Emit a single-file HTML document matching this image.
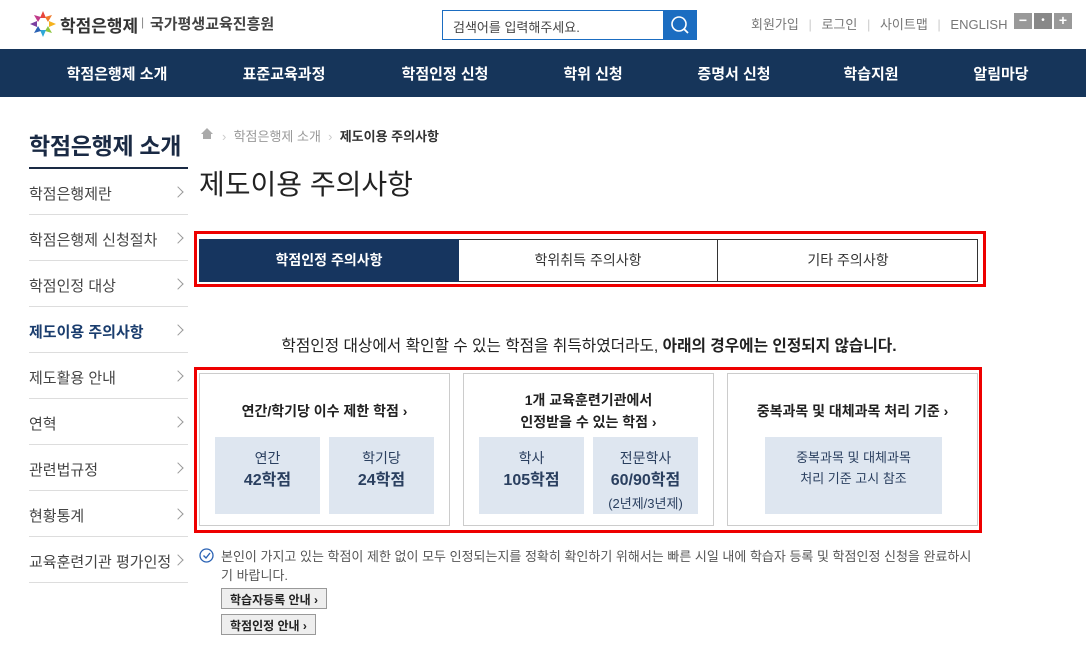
<!DOCTYPE html>
<html><head><meta charset="utf-8"><style>
*{margin:0;padding:0;box-sizing:border-box}
body{width:1086px;height:653px;overflow:hidden;background:#fff;font-family:"Liberation Sans","Noto Sans CJK KR",sans-serif;color:#333;position:relative}
.a{position:absolute;white-space:nowrap}
.nav{position:absolute;left:0;top:49px;width:1086px;height:48px;background:#16355a}
.nav span{position:absolute;top:14px;color:#fff;font-weight:bold;font-size:15px;transform:translateX(-50%)}
.side div{position:absolute;left:29px;width:159px;height:46px;border-bottom:1px solid #ddd;font-size:15px;color:#444;padding-top:14px}
.side div:after{content:"";position:absolute;right:6px;top:19px;width:7px;height:7px;border-right:1.5px solid #999;border-top:1.5px solid #999;transform:rotate(45deg)}
.card{position:absolute;top:373px;width:251px;height:153px;border:1px solid #ccc;text-align:center}
.card h4{position:absolute;left:0;right:0;font-size:14px;color:#222;font-weight:bold;line-height:22px}
.bx{position:absolute;top:63px;height:77px;background:#dee6f0;font-size:14px;color:#2a3f5f;line-height:21px;padding-top:11px}
.bx b{font-size:16px;display:block;line-height:24px}
.btn{position:absolute;left:221px;height:21px;border:1px solid #999;background:#eee;font-size:12px;font-weight:bold;padding:2px 8px;color:#222}
</style></head><body>
<div class="a" style="left:29px;top:10px;width:28px;height:28px;">
<svg width="28" height="28" viewBox="0 0 28 28"><g transform="translate(14,14)">
<path d="M0-13 L3-6 L-3-6Z" fill="#e8463c"/><path d="M9-9 L5-2 L2-7Z" fill="#f07a2a"/><path d="M13 0 L6 3 L6-3Z" fill="#f5b21e"/><path d="M9 9 L2 7 L5 2Z" fill="#8cc63f"/><path d="M0 13 L-3 6 L3 6Z" fill="#2ea7d8"/><path d="M-9 9 L-5 2 L-2 7Z" fill="#2a62b4"/><path d="M-13 0 L-6-3 L-6 3Z" fill="#7b3fa0"/><path d="M-9-9 L-2-7 L-5-2Z" fill="#c03a8a"/></g></svg></div>
<div class="a" style="left:60px;top:12px;font-size:17px;font-weight:bold;color:#333">학점은행제</div>
<div class="a" style="left:141px;top:15px;font-size:12px;color:#888">|</div>
<div class="a" style="left:150px;top:13px;font-size:15px;color:#444;font-weight:bold">국가평생교육진흥원</div>
<div class="a" style="left:442px;top:10px;width:222px;height:30px;border:1px solid #1b6dc1;border-right:none;font-size:13px;color:#444;padding:6px 10px">검색어를 입력해주세요.</div>
<div class="a" style="left:663px;top:10px;width:34px;height:30px;background:#1b6dc1"><svg width="34" height="30"><circle cx="16" cy="14" r="7" fill="none" stroke="#fff" stroke-width="1.6"/><line x1="21" y1="19" x2="25" y2="23" stroke="#fff" stroke-width="1.8"/></svg></div>
<div class="a" style="left:751px;top:14px;font-size:13px;color:#777">회원가입 <span style="color:#ccc;margin:0 6px">|</span> 로그인 <span style="color:#ccc;margin:0 6px">|</span> 사이트맵 <span style="color:#ccc;margin:0 6px">|</span> ENGLISH</div>
<div class="a" style="left:1014px;top:13px;width:18px;height:16px;background:#999;color:#fff;font-size:14px;text-align:center;line-height:15px;font-weight:bold">−</div>
<div class="a" style="left:1034px;top:13px;width:18px;height:16px;background:#888;color:#fff;font-size:10px;text-align:center;line-height:16px">•</div>
<div class="a" style="left:1054px;top:13px;width:18px;height:16px;background:#999;color:#fff;font-size:14px;text-align:center;line-height:15px;font-weight:bold">+</div>
<div class="nav"><span style="left:117px">학점은행제 소개</span><span style="left:284px">표준교육과정</span><span style="left:445px">학점인정 신청</span><span style="left:593px">학위 신청</span><span style="left:734px">증명서 신청</span><span style="left:871px">학습지원</span><span style="left:1001px">알림마당</span></div>
<div class="a" style="left:29px;top:127px;font-size:23px;font-weight:bold;color:#1a2a44;letter-spacing:-0.3px">학점은행제 소개</div>
<div class="a" style="left:29px;top:167px;width:159px;height:2px;background:#1a2a44"></div>
<div class="side">
<div style="top:169px">학점은행제란</div><div style="top:215px">학점은행제 신청절차</div><div style="top:261px">학점인정 대상</div><div style="top:307px;color:#1a3d6e;font-weight:bold">제도이용 주의사항</div><div style="top:353px">제도활용 안내</div><div style="top:399px">연혁</div><div style="top:445px">관련법규정</div><div style="top:491px">현황통계</div><div style="top:537px">교육훈련기관 평가인정</div>
</div>
<svg class="a" style="left:200px;top:127px" width="14" height="13"><path d="M7 1 L13 7 H11 V12 H3 V7 H1Z" fill="#aaa"/></svg>
<div class="a" style="left:222px;top:126px;font-size:13px;color:#999"><span style="color:#ccc">›</span>&nbsp; 학점은행제 소개 &nbsp;<span style="color:#ccc">›</span>&nbsp; <b style="color:#333">제도이용 주의사항</b></div>
<div class="a" style="left:199px;top:163px;font-size:28px;color:#222">제도이용 주의사항</div>
<div class="a" style="left:194px;top:231px;width:792px;height:56px;border:3px solid #e00"></div>
<div class="a" style="left:199px;top:239px;width:779px;height:43px;border:1px solid #333"></div>
<div class="a" style="left:199px;top:239px;width:260px;height:43px;background:#16355f;color:#fff;font-weight:bold;font-size:14px;text-align:center;line-height:43px">학점인정 주의사항</div>
<div class="a" style="left:459px;top:239px;width:259px;height:43px;border-right:1px solid #333;font-size:14px;text-align:center;line-height:43px;color:#333">학위취득 주의사항</div>
<div class="a" style="left:718px;top:239px;width:260px;height:43px;font-size:14px;text-align:center;line-height:43px;color:#333">기타 주의사항</div>
<div class="a" style="left:0;width:1178px;top:333px;text-align:center;font-size:15.7px;color:#222">학점인정 대상에서 확인할 수 있는 학점을 취득하였더라도, <b>아래의 경우에는 인정되지 않습니다.</b></div>
<div class="a" style="left:194px;top:367px;width:788px;height:166px;border:3px solid #e00"></div>
<div class="card" style="left:199px"><h4 style="top:26px">연간/학기당 이수 제한 학점 ›</h4>
<div class="bx" style="left:15px;width:105px">연간<b>42학점</b></div><div class="bx" style="left:129px;width:105px">학기당<b>24학점</b></div></div>
<div class="card" style="left:463px"><h4 style="top:15px">1개 교육훈련기관에서<br>인정받을 수 있는 학점 ›</h4>
<div class="bx" style="left:15px;width:105px">학사<b>105학점</b></div><div class="bx" style="left:129px;width:105px">전문학사<b>60/90학점</b><span style="font-size:13px">(2년제/3년제)</span></div></div>
<div class="card" style="left:727px"><h4 style="top:26px">중복과목 및 대체과목 처리 기준 ›</h4>
<div class="bx" style="left:37px;width:177px;padding-top:10px;font-size:13px">중복과목 및 대체과목<br>처리 기준 고시 참조</div></div>
<svg class="a" style="left:199px;top:548px" width="15" height="15"><circle cx="7.5" cy="7.5" r="6.5" fill="none" stroke="#2a62b4" stroke-width="1.3"/><path d="M4.5 7.5 L7 10 L11 5" fill="none" stroke="#2a62b4" stroke-width="1.4"/></svg>
<div class="a" style="left:221px;top:547px;font-size:13px;color:#555;line-height:19px">본인이 가지고 있는 학점이 제한 없이 모두 인정되는지를 정확히 확인하기 위해서는 빠른 시일 내에 학습자 등록 및 학점인정 신청을 완료하시<br>기 바랍니다.</div>
<div class="btn" style="top:588px">학습자등록 안내 ›</div>
<div class="btn" style="top:614px">학점인정 안내 ›</div>
</body></html>
